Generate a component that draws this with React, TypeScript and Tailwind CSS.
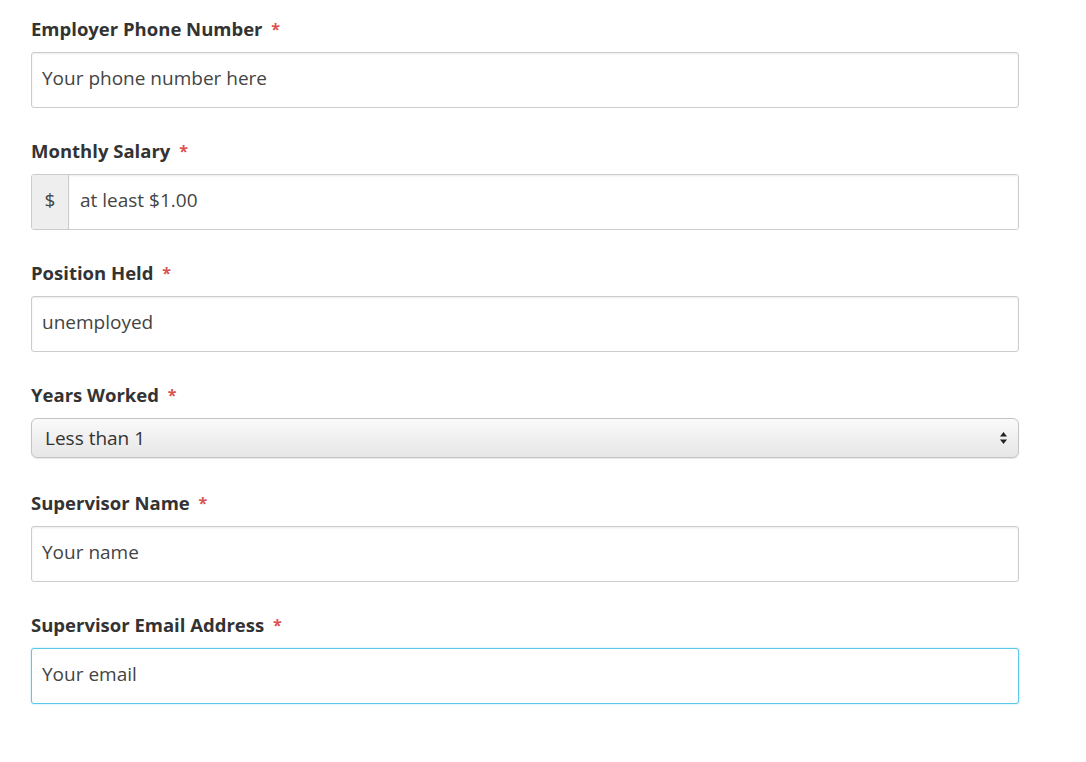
import React from "react";

const font = { fontFamily: "'Open Sans', 'Noto Sans', sans-serif" };

function Label({ text }: { text: string }) {
  return (
    <label className="block h-6 text-[18.5px] leading-6 font-bold text-[#333]">
      {text} <span className="ml-1 align-top text-[16px] text-[#d9534f]">*</span>
    </label>
  );
}

function TextField({
  label,
  value,
  focused = false,
}: {
  label: string;
  value: string;
  focused?: boolean;
}) {
  return (
    <div className="mb-[31px]">
      <Label text={label} />
      <div
        className={`mt-[11px] flex h-14 items-center rounded-[3px] border bg-white px-[10px] pb-1 text-[19px] text-[#444] ${
          focused
            ? "border-[#5bc8ea] shadow-[0_0_2px_rgba(91,200,234,0.6)]"
            : "border-[#ccc] shadow-[inset_0_1px_2px_rgba(0,0,0,0.08)]"
        }`}
      >
        {value}
      </div>
    </div>
  );
}

export default function App() {
  return (
    <div className="min-h-screen bg-white" style={font}>
      <div className="w-[988px] pl-[31px] pt-[17px] box-content">
        <TextField label="Employer Phone Number" value="Your phone number here" />

        <div className="mb-[31px]">
          <Label text="Monthly Salary" />
          <div className="mt-[11px] flex h-14 overflow-hidden rounded-[3px] border border-[#ccc] text-[19px] text-[#444]">
            <div className="flex w-[37px] items-center justify-center border-r border-[#ccc] bg-[#eee] pb-1">
              $
            </div>
            <div className="flex flex-1 items-center bg-white px-[11px] pb-1 shadow-[inset_0_1px_2px_rgba(0,0,0,0.08)]">
              at least $1.00
            </div>
          </div>
        </div>

        <TextField label="Position Held" value="unemployed" />

        <div className="mb-[33px]">
          <Label text="Years Worked" />
          <div className="mt-[11px] flex h-10 items-center justify-between rounded-[6px] border border-[#c4c4c4] bg-gradient-to-b from-[#fafafa] to-[#e6e6e6] pl-[13px] pr-[10px] text-[19px] text-[#333] shadow-[0_1px_1px_rgba(0,0,0,0.1)]">
            <span>Less than 1</span>
            <svg width="9" height="14" viewBox="0 0 9 14">
              <path d="M4.5 1 L8 5.5 H1 Z" fill="#222" />
              <path d="M4.5 13 L8 8.5 H1 Z" fill="#222" />
            </svg>
          </div>
        </div>

        <TextField label="Supervisor Name" value="Your name" />
        <TextField label="Supervisor Email Address" value="Your email" focused />
      </div>
    </div>
  );
}
